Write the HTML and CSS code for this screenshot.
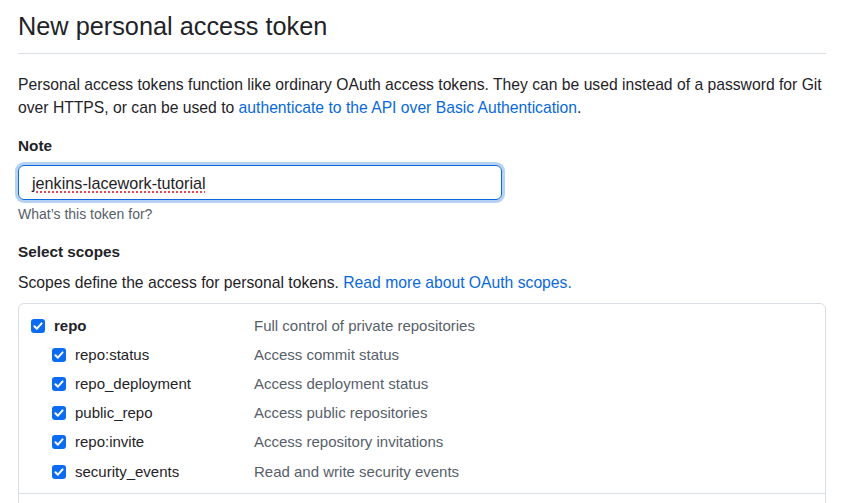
FILE: index.html
```html
<!DOCTYPE html>
<html lang="en">
<head>
<meta charset="utf-8">
<title>New personal access token</title>
<link rel="stylesheet" href="styles.css">
</head>
<body>
<main class="page">
  <h1 class="title">New personal access token</h1>
  <p class="intro">Personal access tokens function like ordinary OAuth access tokens. They can be used instead of a password for Git over HTTPS, or can be used to <a href="#" class="link">authenticate to the API over Basic Authentication</a>.</p>

  <div class="field">
    <label class="label" for="note">Note</label>
    <div class="input-wrap">
      <div class="input" id="note"><span class="misspelled">jenkins-lacework-tutorial</span></div>
    </div>
    <p class="note">What’s this token for?</p>
  </div>

  <h2 class="label scopes-title">Select scopes</h2>
  <p class="scopes-desc">Scopes define the access for personal tokens. <a href="#" class="link">Read more about OAuth scopes.</a></p>

  <div class="scopes">
    <div class="group">
      <div class="row main">
        <span class="cb"><svg viewBox="0 0 14 14" width="14" height="14"><path d="M3.4 7.2 L5.9 9.7 L10.6 4.4" fill="none" stroke="#fff" stroke-width="2" stroke-linecap="round" stroke-linejoin="round"/></svg></span>
        <span class="name strong">repo</span>
        <span class="desc">Full control of private repositories</span>
      </div>
      <div class="row sub">
        <span class="cb"><svg viewBox="0 0 14 14" width="14" height="14"><path d="M3.4 7.2 L5.9 9.7 L10.6 4.4" fill="none" stroke="#fff" stroke-width="2" stroke-linecap="round" stroke-linejoin="round"/></svg></span>
        <span class="name">repo:status</span>
        <span class="desc">Access commit status</span>
      </div>
      <div class="row sub">
        <span class="cb"><svg viewBox="0 0 14 14" width="14" height="14"><path d="M3.4 7.2 L5.9 9.7 L10.6 4.4" fill="none" stroke="#fff" stroke-width="2" stroke-linecap="round" stroke-linejoin="round"/></svg></span>
        <span class="name">repo_deployment</span>
        <span class="desc">Access deployment status</span>
      </div>
      <div class="row sub">
        <span class="cb"><svg viewBox="0 0 14 14" width="14" height="14"><path d="M3.4 7.2 L5.9 9.7 L10.6 4.4" fill="none" stroke="#fff" stroke-width="2" stroke-linecap="round" stroke-linejoin="round"/></svg></span>
        <span class="name">public_repo</span>
        <span class="desc">Access public repositories</span>
      </div>
      <div class="row sub">
        <span class="cb"><svg viewBox="0 0 14 14" width="14" height="14"><path d="M3.4 7.2 L5.9 9.7 L10.6 4.4" fill="none" stroke="#fff" stroke-width="2" stroke-linecap="round" stroke-linejoin="round"/></svg></span>
        <span class="name">repo:invite</span>
        <span class="desc">Access repository invitations</span>
      </div>
      <div class="row sub">
        <span class="cb"><svg viewBox="0 0 14 14" width="14" height="14"><path d="M3.4 7.2 L5.9 9.7 L10.6 4.4" fill="none" stroke="#fff" stroke-width="2" stroke-linecap="round" stroke-linejoin="round"/></svg></span>
        <span class="name">security_events</span>
        <span class="desc">Read and write security events</span>
      </div>
    </div>
    <div class="group">
      <div class="row main">
        <span class="cb off"></span>
        <span class="name strong">workflow</span>
        <span class="desc">Update GitHub Action workflows</span>
      </div>
    </div>
  </div>
</main>
</body>
</html>
```

FILE: styles.css
```css
* { box-sizing: border-box; }

html, body {
  margin: 0;
  background: #ffffff;
}

body {
  font-family: "Liberation Sans", Arial, sans-serif;
  font-size: 15px;
  line-height: 22px;
  color: #1f2328;
}

.page {
  padding: 0 16px 0 18px;
}

.title {
  margin: 0;
  padding: 10px 0 10px;
  font-size: 25.3px;
  line-height: 33px;
  font-weight: 400;
  color: #1f2328;
  border-bottom: 1px solid #d8dee4;
}

.intro {
  margin: 20px 0 0;
  font-size: 15.7px;
  line-height: 22.5px;
}

.link {
  color: #0969da;
  text-decoration: none;
}

.field {
  margin-top: 16px;
}

.label {
  display: block;
  margin: 0;
  font-size: 15.3px;
  line-height: 22px;
  font-weight: 700;
}

.input-wrap {
  margin-top: 8px;
  width: 484px;
}

.input {
  height: 35px;
  padding: 0 13px;
  display: flex;
  align-items: center;
  border: 1px solid #0969da;
  border-radius: 6px;
  box-shadow: 0 0 0 3px rgba(9, 105, 218, 0.3);
  font-size: 16.2px;
  color: #1f2328;
}

.misspelled {
  text-decoration: underline dotted #e5484d;
  text-decoration-thickness: 1.5px;
  text-underline-offset: 3px;
}

.note {
  margin: 4px 0 0;
  font-size: 14px;
  line-height: 20px;
  color: #57606a;
}

.scopes-title {
  margin-top: 17px;
}

.scopes-desc {
  margin: 9px 0 0;
  font-size: 15.7px;
}

.scopes {
  margin-top: 9px;
  border: 1px solid #d8dee4;
  border-radius: 6px;
}

.group {
  padding: 7px 12px 7px;
}

.group + .group {
  border-top: 1px solid #d8dee4;
}

.row {
  display: flex;
  align-items: center;
  height: 29.2px;
}

.row.sub {
  padding-left: 21px;
}

.cb {
  flex: none;
  width: 14px;
  height: 14px;
  border-radius: 3px;
  background: #0b6cf2;
  display: flex;
}

.cb.off {
  background: #fff;
  border: 1px solid #8c959f;
}

.name {
  margin-left: 9px;
  width: 200px;
  flex: none;
}

.row.sub .name {
  margin-left: 9px;
  width: 179px;
}

.strong {
  font-weight: 700;
}

.desc {
  color: #57606a;
}
```
